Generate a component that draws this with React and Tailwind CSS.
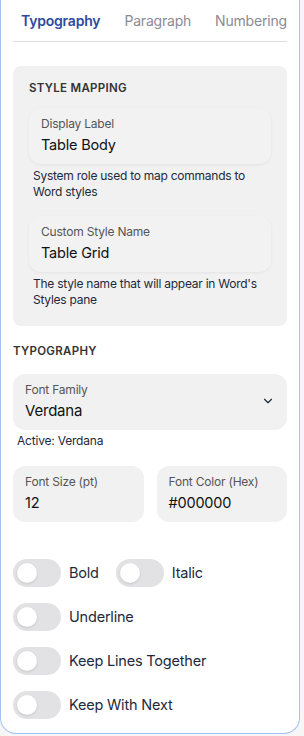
import { ChevronDown } from "lucide-react";

function Field({ label, value, className = "" }) {
  return (
    <div className={"rounded-xl px-3 pt-[7px] pb-[9px] " + className}>
      <div className="text-[12px] leading-[18px] text-[#555]">{label}</div>
      <div className="mt-[2px] text-[14.5px] leading-[20px] text-[#111]">{value}</div>
    </div>
  );
}

function Toggle({ label }) {
  return (
    <div className="flex items-center gap-2">
      <div className="flex h-[28px] w-[48px] items-center rounded-full bg-[#e2e2e4] px-[4px]">
        <div className="h-[20px] w-[20px] rounded-full bg-white shadow-sm" />
      </div>
      <span className="text-[14.5px] text-[#1e293b]">{label}</span>
    </div>
  );
}

export default function App() {
  return (
    <div className="min-h-[736px] bg-[#f6f6f7] font-['Inter',sans-serif] tracking-[-0.2px]">
      <div className="w-[300px] rounded-b-2xl border-x border-b border-[#a6c2f4] bg-white px-3 pb-[14px]">
        {/* tabs */}
        <div className="flex gap-6 border-b border-[#dedede] pl-2 pt-[11px] pb-[10px] text-[14px] leading-[20px]">
          <span className="font-semibold text-[#2e4a9e]">Typography</span>
          <span className="text-[#8a8a96]">Paragraph</span>
          <span className="text-[#8a8a96]">Numbering</span>
        </div>

        {/* style mapping */}
        <div className="mt-6 rounded-lg bg-[#f1f1f1] px-4 pt-[14px] pb-[18px]">
          <div className="text-[11.5px] font-semibold tracking-wide text-[#333]">STYLE MAPPING</div>
          <Field
            label="Display Label"
            value="Table Body"
            className="mt-[11px] bg-[#f2f2f2] shadow-[0_1px_3px_rgba(0,0,0,0.06)]"
          />
          <div className="mt-[4px] px-[4px] text-[12px] leading-[16px] tracking-[-0.25px] text-[#1e293b]">
            System role used to map commands to Word styles
          </div>
          <Field
            label="Custom Style Name"
            value="Table Grid"
            className="mt-[16px] bg-[#f2f2f2] shadow-[0_1px_3px_rgba(0,0,0,0.06)]"
          />
          <div className="mt-[4px] px-[4px] text-[12px] leading-[16px] tracking-[-0.25px] text-[#1e293b]">
            The style name that will appear in Word's Styles pane
          </div>
        </div>

        {/* typography */}
        <div className="mt-[17px] text-[11.5px] font-semibold tracking-wide text-[#333]">TYPOGRAPHY</div>
        <div className="mt-[13px] flex items-center justify-between rounded-xl bg-[#f1f1f1] px-3 pt-[7px] pb-[9px]">
          <div>
            <div className="text-[12px] leading-[18px] text-[#555]">Font Family</div>
            <div className="mt-[2px] text-[15px] leading-[20px] text-[#111]">Verdana</div>
          </div>
          <ChevronDown className="h-[14px] w-[14px] text-[#1e293b]" strokeWidth={2} />
        </div>
        <div className="mt-[3px] px-1 text-[12px] leading-[16px] text-[#1e293b]">Active: Verdana</div>

        <div className="mt-[17px] grid grid-cols-2 gap-[13px]">
          <Field label="Font Size (pt)" value="12" className="bg-[#f1f1f1]" />
          <Field label="Font Color (Hex)" value="#000000" className="bg-[#f1f1f1]" />
        </div>

        <div className="mt-[37px] flex flex-col gap-4">
          <div className="flex items-center gap-[17px]">
            <Toggle label="Bold" />
            <Toggle label="Italic" />
          </div>
          <Toggle label="Underline" />
          <Toggle label="Keep Lines Together" />
          <Toggle label="Keep With Next" />
        </div>
      </div>
    </div>
  );
}
